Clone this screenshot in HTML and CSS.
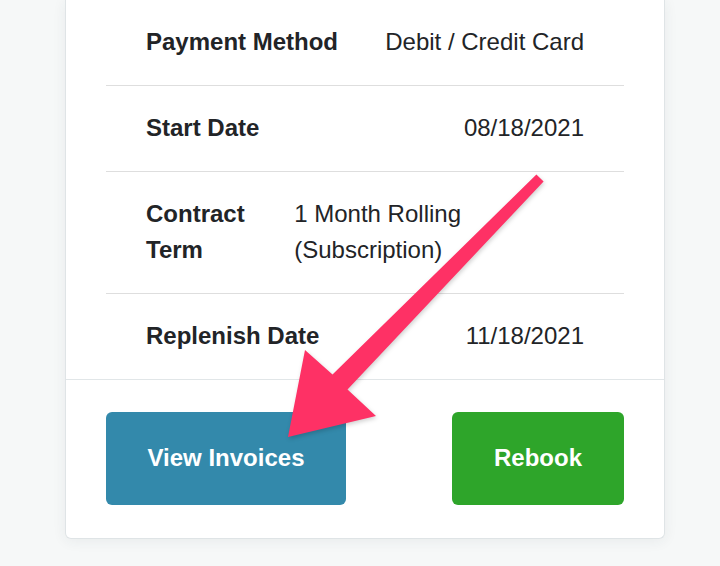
FILE: index.html
```html
<!DOCTYPE html>
<html>
<head>
<meta charset="utf-8">
<link rel="stylesheet" href="styles.css">
</head>
<body>
<div class="page">
  <div class="card">
    <div class="rows">
      <div class="row">
        <div class="label">Payment Method</div>
        <div class="value">Debit / Credit Card</div>
      </div>
      <div class="row">
        <div class="label">Start Date</div>
        <div class="value">08/18/2021</div>
      </div>
      <div class="row">
        <div class="label">Contract Term</div>
        <div class="value">1 Month Rolling (Subscription)</div>
      </div>
      <div class="row">
        <div class="label">Replenish Date</div>
        <div class="value">11/18/2021</div>
      </div>
    </div>
    <div class="footer">
      <button class="btn btn-blue">View Invoices</button>
      <button class="btn btn-green">Rebook</button>
    </div>
  </div>
  <svg class="arrow" width="720" height="566" viewBox="0 0 720 566">
    <polygon points="536.4,174.5 332.5,374.6 305,350 288,437 376,416 347.5,389.4 543.6,181.5" fill="#fe3165"/>
  </svg>
</div>
</body>
</html>
```

FILE: styles.css
```css
html, body {
  margin: 0;
  padding: 0;
  background: #f6f8f8;
}
body {
  font-family: "Liberation Sans", Arial, sans-serif;
  color: #26282b;
  width: 720px;
  height: 566px;
  overflow: hidden;
}
.page {
  position: relative;
  width: 720px;
  height: 566px;
}
.card {
  margin-left: 65px;
  width: 598px;
  background: #fff;
  border: 1px solid #dfe4e6;
  border-top: none;
  border-radius: 0 0 6px 6px;
  box-shadow: 0 2px 14px rgba(40, 60, 70, 0.07);
}
.rows {
  padding: 0 40px;
}
.row {
  display: flex;
  justify-content: space-between;
  gap: 2px;
  padding: 24px 40px 25px;
  font-size: 24px;
  line-height: 36px;
  border-bottom: 1px solid #dedede;
}
.row:last-child {
  border-bottom: none;
}
.label {
  font-weight: bold;
  color: #222427;
}
.value {
  color: #222427;
}
.footer {
  display: flex;
  justify-content: space-between;
  padding: 32px 40px 33px;
  border-top: 1px solid #e1e6e8;
}
.btn {
  font-family: "Liberation Sans", Arial, sans-serif;
  font-size: 24px;
  line-height: 36px;
  font-weight: bold;
  color: #fff;
  border: none;
  border-radius: 6px;
  padding: 28px 0 29px;
  margin: 0;
  white-space: nowrap;
  text-align: center;
}
.btn-blue {
  background: #3389ab;
  width: 240px;
}
.btn-green {
  background: #2ea52a;
  width: 172px;
}
.arrow {
  position: absolute;
  left: 0;
  top: 0;
  filter: drop-shadow(1px 2px 2px rgba(0, 0, 0, 0.18));
}
```
